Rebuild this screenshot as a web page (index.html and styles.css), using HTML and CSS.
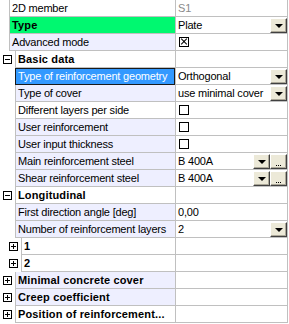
FILE: index.html
```html
<!DOCTYPE html>
<html lang="en">
<head>
    <meta charset="UTF-8">
    <title>2D member properties</title>
    <link rel="stylesheet" href="styles.css">
</head>
<body>
    <div class="grid">
        <div class="row">
            <div class="gutter g1"></div>
            <div class="label">2D member</div>
            <div class="value readonly">S1</div>
        </div>
        <div class="row">
            <div class="gutter g1"></div>
            <div class="label bold green">Type</div>
            <div class="value"><span class="text">Plate</span><span class="btn drop"></span></div>
        </div>
        <div class="row">
            <div class="gutter g1"></div>
            <div class="label tint">Advanced mode</div>
            <div class="value"><span class="check checked"></span></div>
        </div>

        <div class="row">
            <div class="gutter g2"><span class="expander open"></span></div>
            <div class="label bold">Basic data</div>
            <div class="value"></div>
        </div>
        <div class="row">
            <div class="gutter g2"></div>
            <div class="label selected">Type of reinforcement geometry</div>
            <div class="value"><span class="text">Orthogonal</span><span class="btn drop"></span></div>
        </div>
        <div class="row">
            <div class="gutter g2"></div>
            <div class="label tint">Type of cover</div>
            <div class="value"><span class="text">use minimal cover</span><span class="btn drop"></span></div>
        </div>
        <div class="row">
            <div class="gutter g2"></div>
            <div class="label">Different layers per side</div>
            <div class="value"><span class="check"></span></div>
        </div>
        <div class="row">
            <div class="gutter g2"></div>
            <div class="label tint">User reinforcement</div>
            <div class="value"><span class="check"></span></div>
        </div>
        <div class="row">
            <div class="gutter g2"></div>
            <div class="label tint">User input thickness</div>
            <div class="value"><span class="check"></span></div>
        </div>
        <div class="row">
            <div class="gutter g2"></div>
            <div class="label tint">Main reinforcement steel</div>
            <div class="value"><span class="text">B 400A</span><span class="btn drop"></span><span class="btn dots"></span></div>
        </div>
        <div class="row">
            <div class="gutter g2"></div>
            <div class="label tint">Shear reinforcement steel</div>
            <div class="value"><span class="text">B 400A</span><span class="btn drop"></span><span class="btn dots"></span></div>
        </div>

        <div class="row">
            <div class="gutter g2"><span class="expander open"></span></div>
            <div class="label bold">Longitudinal</div>
            <div class="value"></div>
        </div>
        <div class="row">
            <div class="gutter g2"></div>
            <div class="label tint">First direction angle [deg]</div>
            <div class="value"><span class="text">0,00</span></div>
        </div>
        <div class="row">
            <div class="gutter g2"></div>
            <div class="label tint">Number of reinforcement layers</div>
            <div class="value"><span class="text">2</span><span class="btn drop"></span></div>
        </div>
        <div class="row">
            <div class="gutter g3"><span class="expander"></span></div>
            <div class="label bold">1</div>
            <div class="value"></div>
        </div>
        <div class="row">
            <div class="gutter g3"><span class="expander"></span></div>
            <div class="label bold">2</div>
            <div class="value"></div>
        </div>

        <div class="row">
            <div class="gutter g2"><span class="expander"></span></div>
            <div class="label bold tint">Minimal concrete cover</div>
            <div class="value"></div>
        </div>
        <div class="row">
            <div class="gutter g2"><span class="expander"></span></div>
            <div class="label bold tint">Creep coefficient</div>
            <div class="value"></div>
        </div>
        <div class="row">
            <div class="gutter g2"><span class="expander"></span></div>
            <div class="label bold">Position of reinforcement...</div>
            <div class="value"></div>
        </div>
    </div>
</body>
</html>
```

FILE: styles.css
```css
body {
    margin: 0;
    background: #fff;
    font-family: "Liberation Sans", Arial, sans-serif;
    font-size: 11px;
    color: #000;
}

.grid {
    width: 288px;
}

.row {
    display: flex;
    height: 17px;
}

.gutter {
    flex: none;
    position: relative;
}

.g1 { width: 9px; }
.g2 { width: 15px; }
.g3 { width: 21px; }

.label {
    flex: 1;
    min-width: 0;
    border-left: 1px solid #c0c0c0;
    border-bottom: 1px solid #c0c0c0;
    padding-left: 2px;
    line-height: 16px;
    letter-spacing: -0.2px;
    white-space: nowrap;
    overflow: hidden;
}

.label.bold {
    font-weight: bold;
    letter-spacing: 0.15px;
}

.label.tint {
    background: #eeefff;
}

.label.green {
    background: #00f870;
}

.label.selected {
    background: #3399ff;
    color: #fff;
    outline: 1px solid #1a1a1a;
    outline-offset: -1px;
}

.value {
    flex: none;
    width: 109px;
    display: flex;
    align-items: center;
    border-left: 1px solid #c0c0c0;
    border-right: 1px solid #c0c0c0;
    border-bottom: 1px solid #c0c0c0;
    padding-left: 2px;
    letter-spacing: -0.2px;
}

.value.readonly {
    color: #8a8a8a;
    line-height: 16px;
}

.text {
    flex: 1;
    line-height: 16px;
    white-space: nowrap;
}

/* classic 3d buttons */
.btn {
    flex: none;
    width: 17px;
    height: 15px;
    box-sizing: border-box;
    background: #ece9d8;
    border-top: 1px solid #fff;
    border-left: 1px solid #fff;
    border-right: 1px solid #404040;
    border-bottom: 1px solid #404040;
    box-shadow: inset -1px -1px 0 #aca899;
    position: relative;
}

.btn.drop::after {
    content: "";
    position: absolute;
    left: 4px;
    top: 5px;
    border-left: 4px solid transparent;
    border-right: 4px solid transparent;
    border-top: 4px solid #000;
}

.btn.dots::after {
    content: "";
    position: absolute;
    left: 5px;
    bottom: 2px;
    width: 1px;
    height: 1px;
    background: #000;
    box-shadow: 2px 0 0 #000, 4px 0 0 #000;
}

.check {
    width: 10px;
    height: 10px;
    box-sizing: border-box;
    border: 1px solid #000;
    margin-left: 1px;
    position: relative;
}

.check.checked::before,
.check.checked::after {
    content: "";
    position: absolute;
    left: 0;
    top: 3px;
    width: 8px;
    height: 1px;
    background: #000;
    transform: rotate(45deg);
}

.check.checked::after {
    transform: rotate(-45deg);
}

.expander {
    position: absolute;
    left: 3px;
    top: 4px;
    width: 9px;
    height: 9px;
    box-sizing: border-box;
    border: 1px solid #000;
    background: #fff;
}

.g3 .expander {
    left: 9px;
}

.expander::before {
    content: "";
    position: absolute;
    left: 1px;
    top: 3px;
    width: 5px;
    height: 1px;
    background: #000;
}

.expander:not(.open)::after {
    content: "";
    position: absolute;
    left: 3px;
    top: 1px;
    width: 1px;
    height: 5px;
    background: #000;
}
```
